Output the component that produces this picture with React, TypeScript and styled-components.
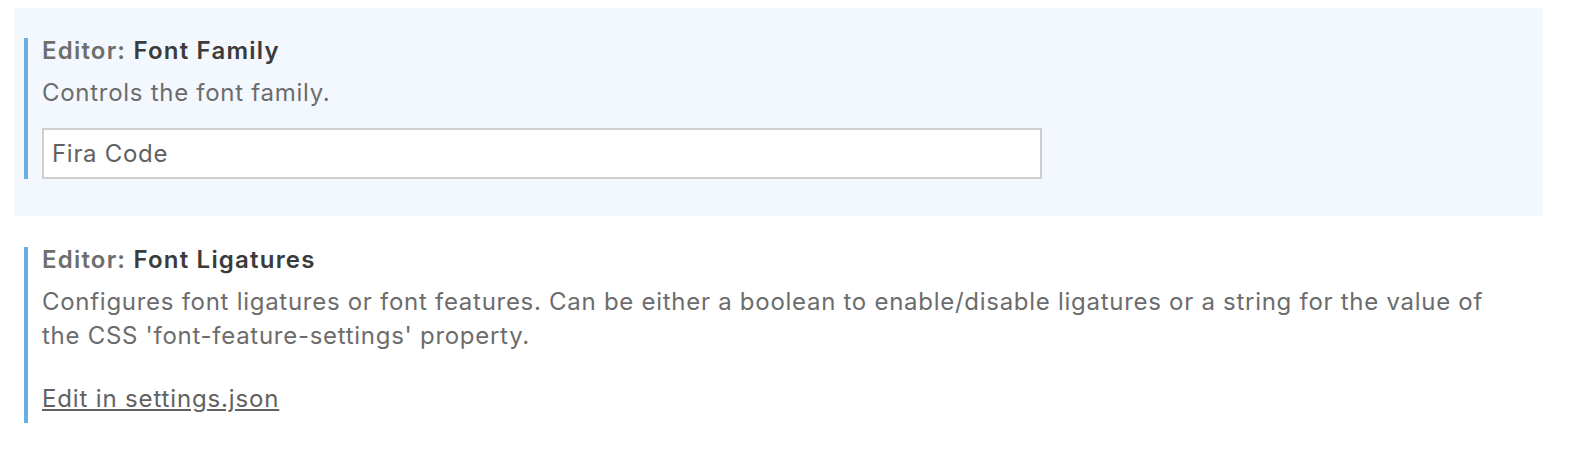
import React from 'react';
import styled, { createGlobalStyle } from 'styled-components';

const GlobalStyle = createGlobalStyle`
  body {
    margin: 0;
    background: #ffffff;
    font-family: Inter, "Noto Sans", sans-serif;
  }
`;

const Page = styled.div`
  display: flex;
  flex-direction: column;
  padding: 8px 31px 0 14px;
`;

const Item = styled.div`
  padding: ${(props) => (props.focused ? '30px 0 37px 10px' : '31px 0 36px 10px')};
  background-color: ${(props) => (props.focused ? '#f3f8fe' : 'transparent')};
`;

const Body = styled.div`
  border-left: 4px solid #68afe0;
  padding-left: 14px;
  display: flex;
  flex-direction: column;
`;

const Title = styled.div`
  font-size: 24px;
  line-height: 26px;
  font-weight: 600;
  letter-spacing: 1.2px;
  color: #6e6e6e;
`;

const Name = styled.span`
  color: #3b3b3b;
`;

const Description = styled.div`
  margin-top: 12px;
  font-size: 24px;
  line-height: 34px;
  letter-spacing: 0.72px;
  color: #6c6c6c;
  max-width: 1460px;
`;

const TextInput = styled.input`
  margin-top: 18px;
  width: 1000px;
  height: 51px;
  box-sizing: border-box;
  border: 2px solid #cecece;
  background: #ffffff;
  padding: 0 8px;
  font-family: Inter, "Noto Sans", sans-serif;
  font-size: 24px;
  letter-spacing: 0.7px;
  color: #616161;
  outline: none;
`;

const EditLink = styled.a`
  margin: 30px 0 8px;
  font-size: 24px;
  line-height: 32px;
  letter-spacing: 0.85px;
  color: #616161;
  text-decoration: underline;
  align-self: flex-start;
  cursor: pointer;
`;

const settings = [
  {
    name: 'Font Family',
    description: 'Controls the font family.',
    value: 'Fira Code',
    focused: true,
  },
  {
    name: 'Font Ligatures',
    description:
      "Configures font ligatures or font features. Can be either a boolean to enable/disable ligatures or a string for the value of the CSS 'font-feature-settings' property.",
    focused: false,
  },
];

const App = () => {
  return (
    <>
      <GlobalStyle />
      <Page>
        {settings.map((setting) => (
          <Item key={setting.name} focused={setting.focused}>
            <Body>
              <Title>
                Editor: <Name>{setting.name}</Name>
              </Title>
              <Description>{setting.description}</Description>
              {setting.value ? (
                <TextInput defaultValue={setting.value} />
              ) : (
                <EditLink>Edit in settings.json</EditLink>
              )}
            </Body>
          </Item>
        ))}
      </Page>
    </>
  );
};

export default App;
